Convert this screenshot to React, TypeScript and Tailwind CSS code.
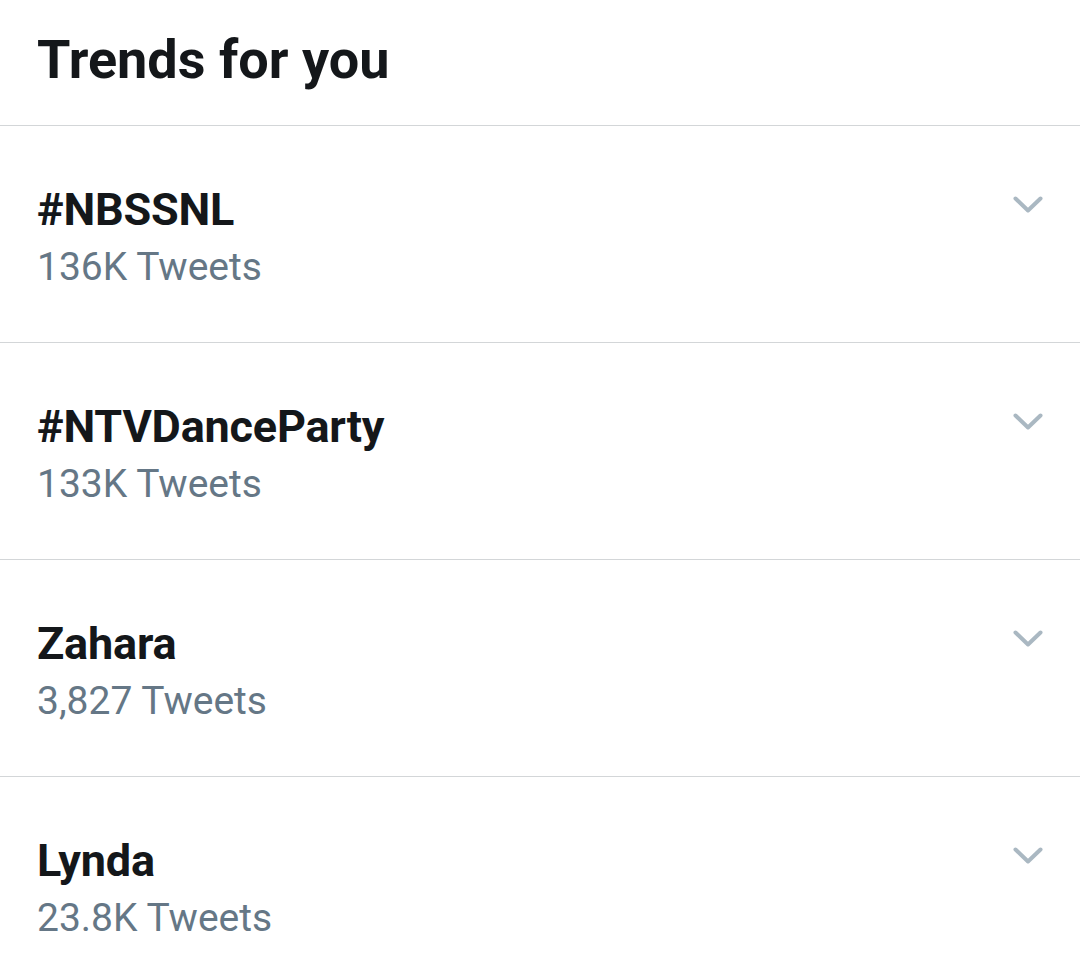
const trends = [
  { name: '#NBSSNL', count: '136K Tweets' },
  { name: '#NTVDanceParty', count: '133K Tweets' },
  { name: 'Zahara', count: '3,827 Tweets' },
  { name: 'Lynda', count: '23.8K Tweets' },
];

const Chevron = () => (
  <svg width="30" height="17" viewBox="0 0 30 17" fill="none" className="mt-[14px] shrink-0">
    <path d="M2.5 2.5 L15 14.5 L27.5 2.5" stroke="#aab8c2" strokeWidth="4" strokeLinecap="round" strokeLinejoin="round" />
  </svg>
);

const App = () => {
  return (
    <div className="w-[1080px] h-[955px] bg-white overflow-hidden font-['Roboto',sans-serif]">
      <div className="h-[126px] px-[37px] pt-[28px] border-b border-[#d3d6d8]">
        <h2 className="text-[54px] leading-[64px] font-bold text-[#14171a]">Trends for you</h2>
      </div>

      {trends.map((t) => (
        <div
          key={t.name}
          className="h-[217px] px-[37px] pt-[56px] border-b border-[#d3d6d8] flex justify-between items-start"
        >
          <div>
            <div className="text-[45px] leading-[55px] font-bold tracking-[-0.2px] text-[#14171a]">{t.name}</div>
            <div className="text-[39px] leading-[61px] text-[#657786]">{t.count}</div>
          </div>
          <Chevron />
        </div>
      ))}
    </div>
  );
};

export default App;
